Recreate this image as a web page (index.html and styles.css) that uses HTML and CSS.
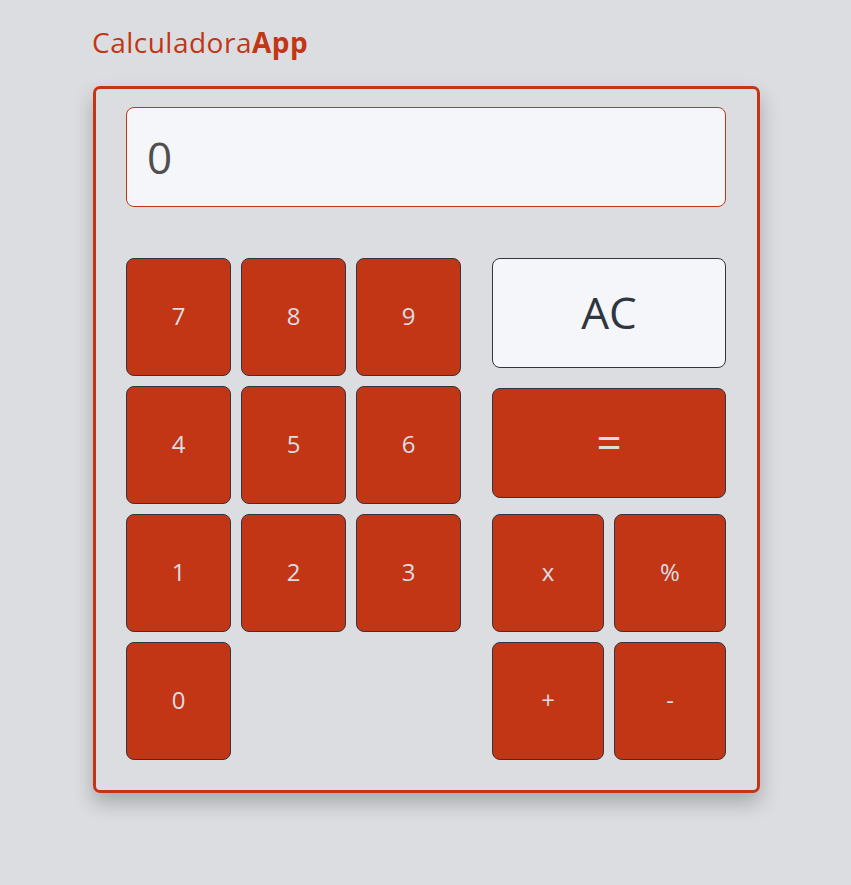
FILE: index.html
```html
<!DOCTYPE html>
<html lang="es">
<head>
<meta charset="utf-8">
<title>CalculadoraApp</title>
<link rel="stylesheet" href="styles.css">
</head>
<body>
<div class="wrap">
  <h1 class="title">Calculadora<strong>App</strong></h1>
  <div class="card">
    <div class="display">0</div>
    <div class="keypad">
      <div class="nums">
        <button class="key">7</button>
        <button class="key">8</button>
        <button class="key">9</button>
        <button class="key">4</button>
        <button class="key">5</button>
        <button class="key">6</button>
        <button class="key">1</button>
        <button class="key">2</button>
        <button class="key">3</button>
        <button class="key">0</button>
      </div>
      <div class="ops">
        <button class="key big light ac">AC</button>
        <button class="key big eq">=</button>
        <div class="pair">
          <button class="key">x</button>
          <button class="key">%</button>
        </div>
        <div class="pair">
          <button class="key">+</button>
          <button class="key">-</button>
        </div>
      </div>
    </div>
  </div>
</div>
</body>
</html>
```
FILE: styles.css
```css
html, body {
  margin: 0;
  padding: 0;
}
body {
  background: #dcdde1;
  font-family: "Open Sans", "Noto Sans", sans-serif;
  min-height: 885px;
}
.wrap {
  width: 667px;
  margin: 0 auto;
  padding-top: 24px;
}
.title {
  margin: 0 0 26px 0;
  font-size: 28px;
  font-weight: 400;
  line-height: 36px;
  color: #c23616;
  letter-spacing: 0.5px;
}
.title strong {
  font-weight: 700;
}
.card {
  box-sizing: border-box;
  width: 667px;
  margin-left: 1px;
  border: 3px solid #c23616;
  border-radius: 7px;
  padding: 18px 31px 30px 30px;
  box-shadow: 0 10px 20px rgba(0, 0, 0, 0.24);
}
.display {
  box-sizing: border-box;
  height: 100px;
  background: #f5f6fa;
  border: 1px solid #c23616;
  border-radius: 8px;
  padding-left: 20px;
  display: flex;
  align-items: center;
  font-size: 44px;
  color: #4f4f4f;
}
.keypad {
  margin-top: 51px;
  display: flex;
  gap: 31px;
}
.nums {
  display: grid;
  grid-template-columns: repeat(3, 105px);
  grid-template-rows: repeat(4, 118px);
  gap: 10px;
}
.ops {
  width: 234px;
  display: flex;
  flex-direction: column;
}
.key {
  box-sizing: border-box;
  background: #c23616;
  border: 1px solid #2f3640;
  border-radius: 8px;
  color: #dcdde1;
  font-family: "Open Sans", "Noto Sans", sans-serif;
  font-size: 24px;
  line-height: 1;
  padding: 0 0 3px 0;
  margin: 0;
}
.ac {
  height: 110px;
}
.eq {
  height: 110px;
  margin-top: 20px;
}
.pair {
  display: flex;
  gap: 10px;
  margin-top: 16px;
}
.pair + .pair {
  margin-top: 10px;
}
.pair .key {
  width: 112px;
  height: 118px;
}
.big {
  font-size: 44px;
}
.light {
  background: #f5f6fa;
  color: #2f3640;
}
```
